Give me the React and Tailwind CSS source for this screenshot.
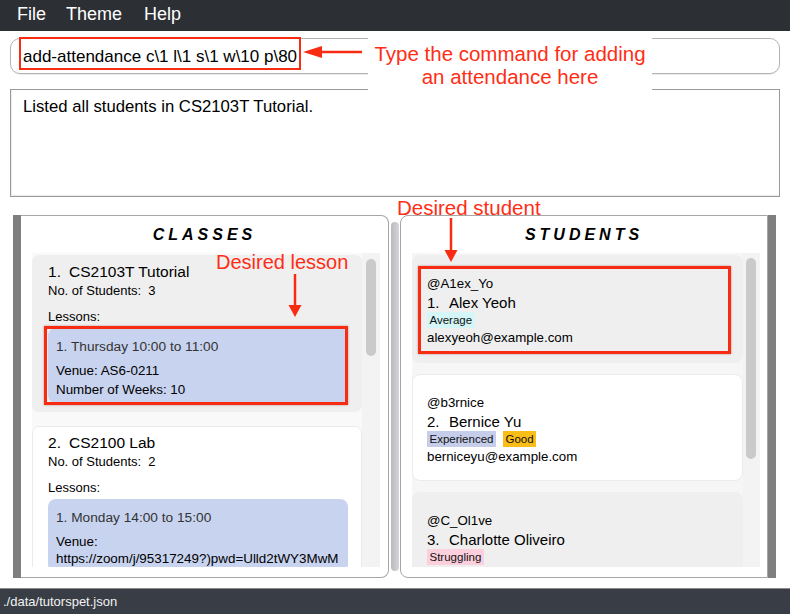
import React from 'react';

function LessonBox({ title, lines, weeks, selected }) {
  return (
    <div className="relative mt-[3px] w-[300px] shrink-0 rounded-[8px] bg-[#c8d3ef] px-[8px] pt-[10px] pb-[5px]">
      <div className="text-[13.7px] leading-[18px] text-[#333333]">{title}</div>
      <div className="mt-[6px] text-[13.4px] leading-[17px]">
        {lines.map((l) => (
          <div key={l} className="whitespace-nowrap">{l}</div>
        ))}
      </div>
      {weeks && <div className="mt-[2px] text-[13.4px] leading-[17px]">Number of Weeks: {weeks}</div>}
      {selected && (
        <div className="absolute -top-[2px] -bottom-[2px] -left-[4px] right-0 border-[3px] border-[#f82c12] shadow-[0_0_2px_rgba(120,0,0,0.4)]" />
      )}
    </div>
  );
}

function ClassCard({ index, name, count, shaded, children }) {
  return (
    <div
      className={
        shaded
          ? 'shrink-0 rounded-[7px] bg-[#efefef] pl-[16px] pt-[7px] pb-[9px]'
          : 'shrink-0 rounded-[7px] border border-[#ebebeb] bg-white pl-[15px] pt-[6px] pb-[9px]'
      }
    >
      <div className="flex text-[15.5px] leading-[20px]">
        <span className="w-[21px]">{index}.</span>
        <span>{name}</span>
      </div>
      <div className="text-[13px] leading-[17px]">
        No. of Students:<span className="ml-[7px]">{count}</span>
      </div>
      <div className="mt-[9px] text-[13px] leading-[17px]">Lessons:</div>
      {children}
    </div>
  );
}

const tagColors = {
  Average: 'bg-[#d4f6f7]',
  Experienced: 'bg-[#c5cdeb]',
  Good: 'bg-[#fbbd17]',
  Struggling: 'bg-[#fccfdc]',
};

function StudentCard({ index, handle, name, tags, email, shaded, selected }) {
  return (
    <div
      className={
        shaded
          ? 'relative h-[108px] shrink-0 rounded-[8px] bg-[#efefef] pl-[15px] pt-[19.5px]'
          : 'relative h-[107px] shrink-0 rounded-[8px] border border-[#ebebeb] bg-white pl-[14px] pt-[18.5px]'
      }
    >
      <div className="text-[13.3px] leading-[17px]">{handle}</div>
      <div className="mt-[1px] flex text-[15px] leading-[19px]">
        <span className="w-[22px]">{index}.</span>
        <span>{name}</span>
      </div>
      <div className="flex gap-[7px]">
        {tags.map((t) => (
          <span key={t} className={`h-[16px] px-[2.5px] text-[11.5px] leading-[16px] text-[#111111] ${tagColors[t]}`}>
            {t}
          </span>
        ))}
      </div>
      {email && <div className="mt-[1px] text-[13.3px] leading-[17px]">{email}</div>}
      {selected && (
        <div className="absolute top-[11px] right-[12px] bottom-[9px] left-[6px] border-[3px] border-[#f82c12] shadow-[0_0_2px_rgba(120,0,0,0.4)]" />
      )}
    </div>
  );
}

export default function App() {
  return (
    <div className="relative flex h-[614px] w-[790px] flex-col overflow-hidden bg-white font-['Liberation_Sans',Arial,sans-serif] text-black">
      {/* menu */}
      <div className="flex h-[31px] shrink-0 bg-[#2c3035] pt-[4px] pl-[17px] text-[18px] leading-[20px] text-white">
        <span>File</span>
        <span className="ml-[20px]">Theme</span>
        <span className="ml-[22px]">Help</span>
      </div>

      {/* command box */}
      <div className="mx-[10px] mt-[7px] h-[36px] shrink-0 rounded-[10px] border border-[#b3b3b3] pt-[8px] pl-[12px] text-[17px] leading-[20px] shadow-[0_1px_1px_rgba(0,0,0,0.08)]">
        {'add-attendance c\\1 l\\1 s\\1 w\\10 p\\80'}
      </div>

      {/* result box */}
      <div className="mx-[10px] mt-[15px] h-[108px] shrink-0 border border-[#9a9a9a] pt-[7px] pl-[12px] text-[16.7px] leading-[20px] shadow-[inset_1px_-1px_1px_rgba(0,0,0,0.08)]">
        Listed all students in CS2103T Tutorial.
      </div>

      {/* panels */}
      <div className="mt-[18px] ml-[13px] flex h-[363px] shrink-0">
        <div className="w-[8px] bg-[#7f7f7f]" />
        <section className="flex w-[368px] flex-col rounded-r-[8px] border border-l-0 border-[#a6a6a6] bg-white">
          <h2 className="h-[37px] shrink-0 pt-[9px] text-center text-[16px] leading-[20px] font-bold tracking-[4px] italic">CLASSES</h2>
          <div className="ml-[11px] flex h-[314px] w-[348px] overflow-hidden bg-[#f9f9f9]">
            <div className="flex w-[330px] shrink-0 flex-col gap-[14px] pt-[2px]">
              <ClassCard index={1} name="CS2103T Tutorial" count={3} shaded>
                <LessonBox title="1. Thursday 10:00 to 11:00" lines={['Venue: AS6-0211']} weeks={10} selected />
              </ClassCard>
              <ClassCard index={2} name="CS2100 Lab" count={2}>
                <LessonBox
                  title="1. Monday 14:00 to 15:00"
                  lines={['Venue:', 'https://zoom/j/95317249?)pwd=Ulld2tWY3MwM']}
                />
              </ClassCard>
            </div>
            <div className="w-[18px] shrink-0 bg-[#f3f3f3] pt-[6px]">
              <div className="ml-[4px] h-[97px] w-[10px] rounded-full bg-[#cacaca]" />
            </div>
          </div>
        </section>

        <div className="my-[7px] mr-[1px] ml-[2px] w-[8px] rounded-full bg-linear-to-r from-[#b8b8bd] to-[#d6d6da]" />

        <section className="flex w-[368px] flex-col rounded-l-[8px] border border-[#a6a6a6] bg-white">
          <h2 className="h-[37px] shrink-0 pt-[9px] text-center text-[16px] leading-[20px] font-bold tracking-[4px] italic">STUDENTS</h2>
          <div className="ml-[11px] flex h-[314px] w-[348px] overflow-hidden bg-[#f6f6f6]">
            <div className="flex w-[331px] shrink-0 flex-col gap-[11px] pt-[2px]">
              <StudentCard index={1} handle="@A1ex_Yo" name="Alex Yeoh" tags={['Average']} email="alexyeoh@example.com" shaded selected />
              <StudentCard index={2} handle="@b3rnice" name="Bernice Yu" tags={['Experienced', 'Good']} email="berniceyu@example.com" />
              <StudentCard index={3} handle="@C_Ol1ve" name="Charlotte Oliveiro" tags={['Struggling']} shaded />
            </div>
            <div className="w-[17px] shrink-0 bg-[#f3f3f3] pt-[5px]">
              <div className="ml-[3px] h-[201px] w-[10px] rounded-full bg-[#cacaca]" />
            </div>
          </div>
        </section>
        <div className="w-[8px] bg-[#7f7f7f]" />
      </div>

      {/* status bar */}
      <div className="mt-auto h-[26px] shrink-0 border-t border-[#8c8c8c] bg-[#393e46] pt-[5px] pl-[3px] text-[13px] leading-[16px] text-[#f2f2f2]">
        ./data/tutorspet.json
      </div>

      {/* annotations */}
      <div className="absolute top-[37px] left-[19px] h-[33px] w-[282px] border-2 border-[#f82c12]" />
      <svg className="absolute top-[44px] left-[300px]" width="64" height="16" viewBox="0 0 64 16">
        <line x1="20" y1="8" x2="62" y2="8" stroke="#f82c12" strokeWidth="2.5" />
        <polygon points="3,8 22,2 22,14" fill="#f82c12" />
      </svg>
      <div className="absolute top-[34px] left-[368px] h-[57px] w-[284px] bg-white pt-[7.5px] text-center text-[20.5px] leading-[23px] text-[#ff2d16]">
        <div>Type the command for adding</div>
        <div>an attendance here</div>
      </div>

      <div className="absolute top-[250px] left-[216px] text-[20px] leading-[24px] text-[#ff2d16]">Desired lesson</div>
      <svg className="absolute top-[273px] left-[288px]" width="14" height="46" viewBox="0 0 14 46">
        <line x1="7" y1="1" x2="7" y2="33" stroke="#f82c12" strokeWidth="2.5" />
        <polygon points="0.5,32 13.5,32 7,44" fill="#f82c12" />
      </svg>

      <div className="absolute top-[195.5px] left-[397px] text-[20.5px] leading-[24px] text-[#ff2d16]">Desired student</div>
      <svg className="absolute top-[217px] left-[444px]" width="14" height="46" viewBox="0 0 14 46">
        <line x1="7" y1="1" x2="7" y2="34" stroke="#f82c12" strokeWidth="2.5" />
        <polygon points="0.5,33 13.5,33 7,45" fill="#f82c12" />
      </svg>
    </div>
  );
}
